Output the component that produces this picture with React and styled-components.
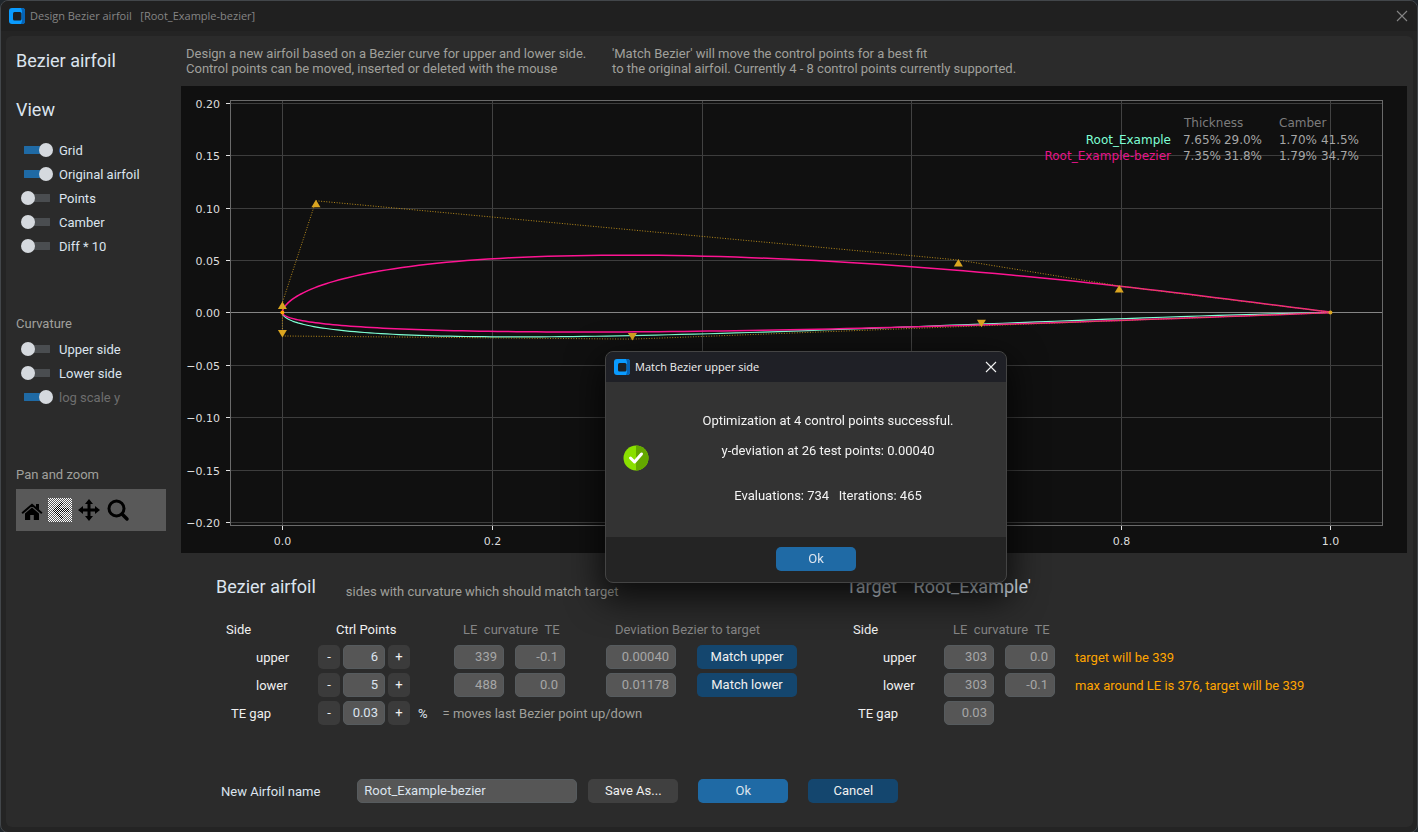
import React from "react";
import styled, { createGlobalStyle, css } from "styled-components";

const GlobalStyle = createGlobalStyle`
  *, *::before, *::after { box-sizing: border-box; }
  html, body { margin: 0; background: #20262b; }
  body { font: 13px/15px Roboto, sans-serif; color: #dce4ee; }
  button, input { font: inherit; color: inherit; }
`;

const tone = {
  normal: "#dce4ee",
  white: "#f0f0f0",
  muted: "#a0a09c",
  dim: "#858585",
  off: "#6e6e6e",
  warn: "#ffa500",
};

const Window = styled.div`
  min-height: 100vh;
  display: flex;
  flex-direction: column;
  background: #242424;
  border: 1px solid #42464a;
  border-radius: 8px;
  padding-bottom: 5px;
`;

const TitleBar = styled.header`
  height: 30px;
  display: flex;
  align-items: center;
  gap: 5px;
  padding: 0 9px 0 8px;
  background: ${(p) => (p.$active ? "#1f2026" : "#202020")};
  color: ${(p) => (p.$active ? "#f2f2f2" : "#858585")};
  border-radius: 8px 8px 0 0;
  font: 11px/16px "Open Sans", "Noto Sans", sans-serif;
`;

const TitleText = styled.h1`
  flex: 1;
  margin: 0;
  font: inherit;
  white-space: pre;
`;

const CloseButton = styled.button`
  display: grid;
  place-items: center;
  width: 12px;
  height: 12px;
  padding: 0;
  border: 0;
  background: none;
`;

const Content = styled.main`
  flex: 1;
  display: grid;
  grid-template-columns: 175px minmax(0, 1fr);
  margin: 5px 4px 0 5px;
  padding-right: 6px;
  background: #2b2b2b;
  border-radius: 6px;
`;

const Sidebar = styled.aside`
  padding: 15px 15px 0 10px;
`;

const Heading = styled.h2`
  margin: 0;
  font-size: 18px;
  line-height: 20px;
  font-weight: 400;
  white-space: pre;
`;

const SwitchGroup = styled.fieldset`
  border: 0;
  margin: 0;
  min-width: 0;
  padding: ${(p) => p.$top}px 0 0;
`;

const SwitchList = styled.div`
  display: grid;
  grid-auto-rows: 24px;
  align-items: center;
  margin-top: ${(p) => p.$top}px;
`;

const SwitchLabel = styled.label`
  display: flex;
  align-items: center;
  gap: 9px;
  padding-left: 5px;
  color: ${(p) => (p.$off ? tone.off : tone.normal)};
`;

const SwitchInput = styled.input`
  appearance: none;
  flex: none;
  display: flex;
  align-items: center;
  justify-content: flex-start;
  width: 29px;
  height: 14px;
  margin: 0;
  background: linear-gradient(#4a4d50, #4a4d50) right center / 26px 8px no-repeat;
  border-radius: 4px;
  &::before {
    content: "";
    width: 14px;
    height: 14px;
    border-radius: 7px;
    background: #d5d9de;
  }
  &:checked {
    justify-content: flex-end;
    margin: 0 -3px 0 3px;
    background-image: linear-gradient(#1f6aa5, #1f6aa5);
    background-position: left center;
  }
`;

const Toolbar = styled.div`
  display: flex;
  align-items: center;
  gap: 4px;
  height: 42px;
  margin-top: 7px;
  padding-left: 3px;
  background: #595959;
`;

const ToolButton = styled.button`
  display: grid;
  place-items: center start;
  width: 25px;
  height: 25px;
  padding: 0;
  border: 0;
  background: none;
`;

const PanZoom = styled.section`
  padding-top: 58px;
`;

const Label = styled.span`
  color: ${(p) => tone[p.$tone || "normal"]};
  white-space: pre;
`;

const Work = styled.div`
  min-width: 0;
`;

const Intro = styled.div`
  display: grid;
  grid-template-columns: 426px 1fr;
  padding: 10px 5px 10px;
`;

const IntroText = styled.p`
  margin: 0;
  color: ${tone.muted};
  white-space: pre-line;
`;

const Plot = styled.svg`
  display: block;
  width: 100%;
  height: 467px;
  background: #101010;
  font: 11px "DejaVu Sans", sans-serif;
`;

const Panels = styled.div`
  display: flex;
  gap: 49px;
  padding: 24px 0 0 35px;
`;

const PanelHead = styled.div`
  display: flex;
  gap: 30px;
  height: 20px;
  align-items: flex-start;
  & > span { margin-top: 7px; }
`;

const cell = css`
  padding: 0;
  height: ${(p) => p.$h || 28}px;
  text-align: left;
  font-weight: 400;
  vertical-align: middle;
`;

const Table = styled.table`
  margin-top: 19px;
  border-collapse: collapse;
  table-layout: fixed;
  width: ${(p) => p.$width}px;
`;

const Th = styled.th`
  ${cell}
  padding-left: ${(p) => p.$indent || 0}px;
  white-space: pre;
  color: ${(p) => tone[p.$tone || "white"]};
`;

const Td = styled.td`
  ${cell}
  white-space: pre;
`;

const Controls = styled.div`
  display: flex;
  align-items: center;
  gap: ${(p) => p.$gap || 3}px;
`;

const Field = styled.input`
  display: block;
  width: ${(p) => p.$w}px;
  height: 24px;
  padding: 0 6px 1px;
  border: 1px solid #565b5e;
  border-radius: 5px;
  background: #565656;
  color: ${(p) => (p.readOnly ? "#a6a6a6" : tone.normal)};
  text-align: ${(p) => p.$align || "right"};
  outline: 0;
`;

const fills = {
  step: ["#3b3b3b", "#f0f0f0"],
  grey: ["#404040", "#f0f0f0"],
  deep: ["#14466e", "#f0f0f0"],
  blue: ["#1f6aa5", "#dce4ee"],
};

const Button = styled.button`
  display: block;
  width: ${(p) => p.$w}px;
  height: 24px;
  padding: 0 0 1px;
  border: 0;
  border-radius: 5px;
  background: ${(p) => fills[p.$kind][0]};
  color: ${(p) => fills[p.$kind][1]};
`;

const Footer = styled.form`
  display: flex;
  align-items: center;
  gap: 11px;
  padding: 52px 0 24px 40px;
`;

const NameLabel = styled.label`
  display: flex;
  align-items: center;
  gap: 37px;
`;

const Dialog = styled.div`
  position: fixed;
  top: 351px;
  left: calc(50% - 104px);
  width: 402px;
  border: 1px solid #444;
  border-radius: 8px;
  background: #242424;
  box-shadow: 0 12px 34px 4px rgba(0, 0, 0, 0.72);
`;

const DialogBody = styled.div`
  display: grid;
  grid-template-columns: 42px 1fr;
  align-items: center;
  height: 155px;
  padding: 0 15px 3px 17px;
  background: #333333;
  color: #f4f4f4;
`;

const Message = styled.p`
  margin: 0;
  padding-bottom: 1px;
  line-height: 15px;
  text-align: center;
  white-space: pre;
`;

const DialogActions = styled.div`
  display: flex;
  justify-content: center;
  padding: 10px 0 11px 20px;
`;

function AppIcon() {
  return (
    <svg width="16" height="16" viewBox="0 0 16 16" aria-hidden="true">
      <rect width="16" height="16" rx="3" fill="#0a9bff" />
      <path d="M12 0h1a3 3 0 0 1 3 3v10a3 3 0 0 1-3 3h-1l1-3V3z" fill="#0663b5" />
      <rect x="4" y="4" width="8.500" height="8.500" rx="1.5" fill="#1d2024" />
    </svg>
  );
}

function Close({ size, label }) {
  return (
    <CloseButton type="button" aria-label={label}>
      <svg width={size} height={size} viewBox="0 0 12 12" stroke="currentColor" strokeWidth="1.1">
        <path d="M1 1l10 10M11 1L1 11" />
      </svg>
    </CloseButton>
  );
}

function Switch({ label, on, off }) {
  return (
    <SwitchLabel $off={off}>
      <SwitchInput type="checkbox" role="switch" defaultChecked={on} disabled={off} />
      {label}
    </SwitchLabel>
  );
}

/* Chart scale: one unit is equally long on both axes. */
const UNIT = 1048;
const sx = (x) => 101.4 + x * UNIT;
const sy = (y) => 226.4 - y * UNIT;

const upper = [[0, 0], [0, 0.0095], [0.032, 0.1065], [0.645, 0.05], [0.7985, 0.0252], [1, 0.0003]];
const lower = [[0, 0], [0, -0.0225], [0.334, -0.0255], [0.667, -0.0128], [1, -0.0003]];
const original = [[0, 0], [0, -0.028], [0.25, -0.036], [0.64, -0.0078], [1, 0]];

function pointAt(points, t) {
  let pts = points;
  while (pts.length > 1) {
    pts = pts.slice(1).map((p, i) => [
      pts[i][0] + (p[0] - pts[i][0]) * t,
      pts[i][1] + (p[1] - pts[i][1]) * t,
    ]);
  }
  return pts[0];
}

const toLine = (pts) => pts.map(([x, y]) => `${sx(x).toFixed(2)},${sy(y).toFixed(2)}`).join(" ");
const curve = (points) => toLine(Array.from({ length: 121 }, (_, i) => pointAt(points, (i / 120) ** 1.5)));

function Marker({ at, down }) {
  const x = sx(at[0]);
  const y = sy(at[1]);
  return <path fill="#daa520" d={down ? `M${x - 4.5} ${y - 6}h9l-4.5 7.500z` : `M${x - 4.5} ${y + 6.5}h9l-4.5-7.500z`} />;
}

function AirfoilPlot() {
  const xs = [0, 0.2, 0.4, 0.6, 0.8, 1];
  const ys = [0.2, 0.15, 0.1, 0.05, 0, -0.05, -0.1, -0.15, -0.2];
  const px = (v) => Math.round(v) + 0.5;
  return (
    <Plot viewBox="0 0 1226 467" role="img" aria-label="Airfoil plot">
      {xs.map((v) => (
        <g key={v}>
          <path d={`M${px(sx(v))} 15V439`} stroke="#424242" />
          <path d={`M${px(sx(v))} 440v4`} stroke="#e0e0e0" />
          <text x={px(sx(v))} y="459" fill="#dddddd" textAnchor="middle">{v.toFixed(1)}</text>
        </g>
      ))}
      {ys.map((v) => (
        <g key={v}>
          <path d={`M50 ${px(sy(v))}H1201`} stroke={v === 0 ? "#858585" : "#3d3d3d"} />
          <path d={`M45 ${px(sy(v))}h4`} stroke="#e0e0e0" />
          <text x="39" y={px(sy(v)) + 4} fill="#dddddd" textAnchor="end">{v.toFixed(2).replace("-", "−")}</text>
        </g>
      ))}
      <rect x="49.5" y="14.5" width="1152" height="425" fill="none" stroke="#6a6a6a" />
      <g fill="none">
        <polyline points={curve(original)} stroke="#7fffd4" strokeWidth="1.2" />
        <polyline points={curve(upper)} stroke="#ff1493" strokeWidth="1.5" />
        <polyline points={curve(lower)} stroke="#ff1493" strokeWidth="1.5" />
        <polyline points={toLine(upper)} stroke="#b98c1c" strokeDasharray="1 1.6" />
        <polyline points={toLine(lower)} stroke="#b98c1c" strokeDasharray="1 1.6" />
      </g>
      {upper.slice(1, 5).map((p) => <Marker key={p[0]} at={p} />)}
      {lower.slice(1, 4).map((p) => <Marker key={p[0]} at={p} down />)}
      <circle cx={sx(0)} cy={sy(0)} r="2" fill="#ffa500" />
      <circle cx={sx(1)} cy={sy(0)} r="2" fill="#daa520" />
      <g fontSize="12">
        <text x="1003" y="41" fill="#7c7c7c">Thickness</text>
        <text x="1098" y="41" fill="#7c7c7c">Camber</text>
        <text x="990" y="58" fill="#7fffd4" textAnchor="end">Root_Example</text>
        <text x="990" y="74" fill="#e6148a" textAnchor="end">Root_Example-bezier</text>
        {[["7.65%", "29.0%", "1.70%", "41.5%"], ["7.35%", "31.8%", "1.79%", "34.7%"]].map((row, r) =>
          row.map((t, c) => (
            <text key={t} x={[1040, 1081, 1136, 1178][c]} y={58 + r * 16} fill="#a6a6a6" textAnchor="end">{t}</text>
          ))
        )}
      </g>
    </Plot>
  );
}

function Stepper({ value, label }) {
  return (
    <Controls>
      <Button type="button" $kind="step" $w={22} aria-label={`Decrease ${label}`}>-</Button>
      <Field $w={42} defaultValue={value} aria-label={label} />
      <Button type="button" $kind="step" $w={22} aria-label={`Increase ${label}`}>+</Button>
    </Controls>
  );
}

function Curvature({ le, te, side }) {
  return (
    <Controls $gap={11}>
      <Field $w={50} readOnly value={le} aria-label={`${side} LE curvature`} />
      <Field $w={50} readOnly value={te} aria-label={`${side} TE curvature`} />
    </Controls>
  );
}

function BezierPanel() {
  const rows = [
    ["upper", "6", "339", "-0.1", "0.00040"],
    ["lower", "5", "488", "0.0", "0.01178"],
  ];
  return (
    <section>
      <PanelHead>
        <Heading>Bezier airfoil</Heading>
        <Label $tone="muted">sides with curvature which should match target</Label>
      </PanelHead>
      <Table $width={581}>
        <colgroup>
          <col width="102" /><col width="136" /><col width="152" /><col width="91" /><col width="100" />
        </colgroup>
        <thead>
          <tr>
            <Th $h={27} scope="col" $indent={10}>Side</Th>
            <Th $h={27} scope="col" $indent={18}>Ctrl Points</Th>
            <Th $h={27} scope="col" $indent={9} $tone="dim">LE  curvature  TE</Th>
            <Th $h={27} scope="col" $indent={9} $tone="dim" colSpan="2">Deviation Bezier to target</Th>
          </tr>
        </thead>
        <tbody>
          {rows.map(([side, n, le, te, dev]) => (
            <tr key={side}>
              <Th scope="row" $indent={40}>{side}</Th>
              <Td><Stepper value={n} label={`${side} control points`} /></Td>
              <Td><Curvature le={le} te={te} side={side} /></Td>
              <Td><Field $w={70} readOnly value={dev} aria-label={`${side} deviation`} /></Td>
              <Td><Button type="button" $kind="deep" $w={100}>{`Match ${side}`}</Button></Td>
            </tr>
          ))}
          <tr>
            <Th scope="row" $indent={15}>TE gap</Th>
            <Td colSpan="4">
              <Controls $gap={8}>
                <Stepper value="0.03" label="TE gap" />
                <Controls $gap={15}>
                  <Label>%</Label>
                  <Label $tone="muted">= moves last Bezier point up/down</Label>
                </Controls>
              </Controls>
            </Td>
          </tr>
        </tbody>
      </Table>
    </section>
  );
}

function TargetPanel() {
  const rows = [
    ["upper", "303", "0.0", "target will be 339"],
    ["lower", "303", "-0.1", "max around LE is 376, target will be 339"],
  ];
  return (
    <section>
      <Heading>{"Target   'Root_Example'"}</Heading>
      <Table $width={469}>
        <colgroup>
          <col width="98" /><col width="131" /><col width="240" />
        </colgroup>
        <thead>
          <tr>
            <Th $h={27} scope="col" $indent={7}>Side</Th>
            <Th $h={27} scope="col" $indent={9} $tone="dim">LE  curvature  TE</Th>
            <Td $h={27} />
          </tr>
        </thead>
        <tbody>
          {rows.map(([side, le, te, note]) => (
            <tr key={side}>
              <Th scope="row" $indent={37}>{side}</Th>
              <Td><Curvature le={le} te={te} side={`Target ${side}`} /></Td>
              <Td><Label $tone="warn">{note}</Label></Td>
            </tr>
          ))}
          <tr>
            <Th scope="row" $indent={12}>TE gap</Th>
            <Td><Field $w={50} readOnly value="0.03" aria-label="Target TE gap" /></Td>
            <Td />
          </tr>
        </tbody>
      </Table>
    </section>
  );
}

function Tools() {
  return (
    <Toolbar role="toolbar" aria-label="Pan and zoom">
      <ToolButton type="button" aria-label="Home">
        <svg width="24" height="24" viewBox="0 0 24 24">
          <path d="M6 15.500l7-6 7 6V22h-5.200v-5h-3.600v5H6z" />
          <path d="M3.700 14.700L13 6.800l9.300 7.900" fill="none" stroke="#000" strokeWidth="2" strokeLinecap="round" />
          <path d="M17 6h3v6l-3-2.500z" />
        </svg>
      </ToolButton>
      <ToolButton type="button" aria-label="Back" disabled>
        <svg width="24" height="24" viewBox="0 0 24 24" shapeRendering="crispEdges">
          <defs>
            <pattern id="check" width="2" height="2" patternUnits="userSpaceOnUse">
              <path d="M0 0h1v1H0zM1 1h1v1H1z" fill="#fff" />
            </pattern>
          </defs>
          <path d="M13 3l2 2-5 5h11v4H10l5 5-2 2-9-9z" fill="#000" />
          <rect width="24" height="24" fill="url(#check)" />
        </svg>
      </ToolButton>
      <ToolButton type="button" aria-label="Pan">
        <svg width="24" height="24" viewBox="0 0 24 24">
          <path d="M12 1l4 5h-2.500v4.500H18V8l5 4-5 4v-2.500h-4.500V18H16l-4 5-4-5h2.500v-4.500H6V16l-5-4 5-4v2.500h4.500V6H8z" />
        </svg>
      </ToolButton>
      <ToolButton type="button" aria-label="Zoom">
        <svg width="24" height="24" viewBox="0 0 24 24" fill="none" stroke="#000">
          <circle cx="10.500" cy="10.500" r="7.500" strokeWidth="3" />
          <path d="M16 16l5 5" strokeWidth="3.500" strokeLinecap="round" />
        </svg>
      </ToolButton>
    </Toolbar>
  );
}

function ResultDialog() {
  return (
    <Dialog role="dialog" aria-label="Match Bezier upper side">
      <TitleBar $active>
        <AppIcon />
        <TitleText as="h2">Match Bezier upper side</TitleText>
        <Close size="12" label="Close message" />
      </TitleBar>
      <DialogBody>
        <svg width="26" height="26" viewBox="0 0 26 26" aria-hidden="true">
          <circle cx="13" cy="13" r="12.500" fill="#8ae000" />
          <path d="M13 .5a12.500 12.500 0 0 1 0 25z" fill="#64a800" />
          <path d="M7.500 13l4 4 7-8" fill="none" stroke="#fff" strokeWidth="3" strokeLinecap="round" strokeLinejoin="round" />
        </svg>
        <Message>{"Optimization at 4 control points successful.\n\ny-deviation at 26 test points: 0.00040\n\n\nEvaluations: 734   Iterations: 465"}</Message>
      </DialogBody>
      <DialogActions>
        <Button type="button" $kind="blue" $w={80}>Ok</Button>
      </DialogActions>
    </Dialog>
  );
}

export default function App() {
  return (
    <>
      <GlobalStyle />
      <Window>
        <TitleBar>
          <AppIcon />
          <TitleText>{"Design Bezier airfoil   [Root_Example-bezier]"}</TitleText>
          <Close size="12" label="Close window" />
        </TitleBar>
        <Content>
          <Sidebar>
            <Heading>Bezier airfoil</Heading>
            <SwitchGroup $top={29} aria-label="View">
              <Heading>View</Heading>
              <SwitchList $top={18}>
                <Switch label="Grid" on />
                <Switch label="Original airfoil" on />
                <Switch label="Points" />
                <Switch label="Camber" />
                <Switch label="Diff * 10" />
              </SwitchList>
            </SwitchGroup>
            <SwitchGroup $top={58} aria-label="Curvature">
              <Label $tone="muted">Curvature</Label>
              <SwitchList $top={6}>
                <Switch label="Upper side" />
                <Switch label="Lower side" />
                <Switch label="log scale y" on off />
              </SwitchList>
            </SwitchGroup>
            <PanZoom>
              <Label $tone="muted">Pan and zoom</Label>
              <Tools />
            </PanZoom>
          </Sidebar>
          <Work>
            <Intro>
              <IntroText>{"Design a new airfoil based on a Bezier curve for upper and lower side.\nControl points can be moved, inserted or deleted with the mouse"}</IntroText>
              <IntroText>{"'Match Bezier' will move the control points for a best fit\nto the original airfoil. Currently 4 - 8 control points currently supported."}</IntroText>
            </Intro>
            <AirfoilPlot />
            <Panels>
              <BezierPanel />
              <TargetPanel />
            </Panels>
            <Footer onSubmit={(e) => e.preventDefault()}>
              <NameLabel>
                New Airfoil name
                <Field $w={220} $align="left" defaultValue="Root_Example-bezier" />
              </NameLabel>
              <Controls $gap={20}>
                <Button type="button" $kind="grey" $w={90}>Save As...</Button>
                <Button type="submit" $kind="blue" $w={90}>Ok</Button>
                <Button type="button" $kind="deep" $w={90}>Cancel</Button>
              </Controls>
            </Footer>
          </Work>
        </Content>
      </Window>
      <ResultDialog />
    </>
  );
}
